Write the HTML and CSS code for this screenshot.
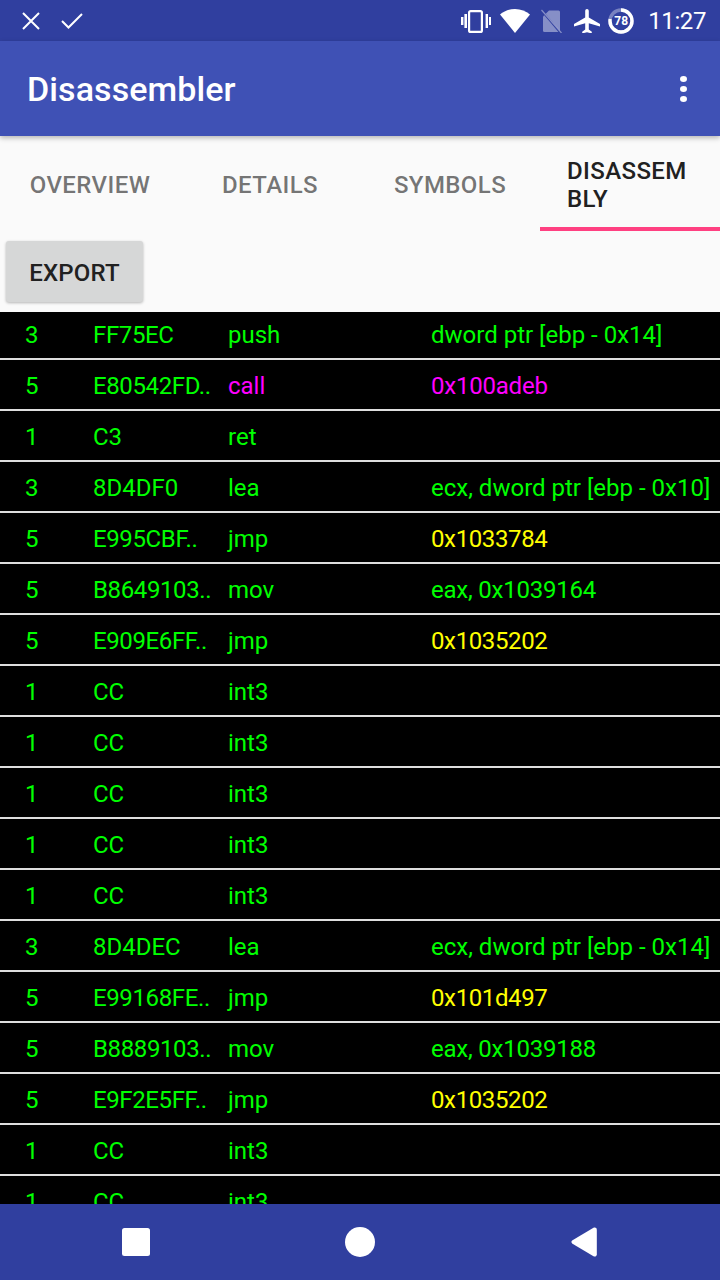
FILE: index.html
```html
<!DOCTYPE html>
<html lang="en">
<head>
<meta charset="utf-8">
<title>Disassembler</title>
<link rel="stylesheet" href="styles.css">
</head>
<body>
<div class="screen">
  <div class="statusbar">
    <div class="status-left">
      <svg class="ic-x" viewBox="0 0 18 18"><path d="M1 1L17 17M17 1L1 17" stroke="#fff" stroke-width="2" fill="none"/></svg>
      <svg class="ic-check" viewBox="0 0 22 16"><path d="M1 8L7.5 14.5L21 1" stroke="#fff" stroke-width="2" fill="none"/></svg>
    </div>
    <div class="status-right">
      <svg class="ic-vib" viewBox="0 0 30 24"><rect x="8.1" y="2.100" width="12.800" height="20.800" rx="1.500" stroke="#fff" stroke-width="2.200" fill="none"/><path d="M0 8h2.400v8H0zM3.400 5h2.600v14H3.400zM24.600 5h2.400v14h-2.400zM28 8h2v8h-2z" fill="#fff"/></svg>
      <svg class="ic-wifi" viewBox="0 0 30 24"><path d="M15 24L0 5.500C4 2.200 9.200 0 15 0s11 2.200 15 5.500z" fill="#fff"/></svg>
      <svg class="ic-sim" viewBox="0 0 22 24"><path d="M8 1.500H17.500a1.500 1.500 0 0 1 1.500 1.500V21.500a1.500 1.500 0 0 1-1.500 1.500H3.500A1.500 1.500 0 0 1 2 21.500V7.500z" fill="#fff" fill-opacity=".42"/><path d="M1.500 2.500L20 24.500" stroke="#303f9f" stroke-width="2"/><path d="M0.500 1L20.500 24" stroke="#fff" stroke-opacity=".42" stroke-width="1.200"/></svg>
      <svg class="ic-plane" viewBox="0 0 26 24"><path d="M11.200 2C11.200.9 12 0 13 0s1.800.9 1.800 2v6.500L26 15v2.600L14.800 14.200V20.500L17.800 22.700V24.500L13 23.200L8.200 24.500V22.700L11.200 20.500V14.200L0 17.600V15L11.200 8.500z" fill="#fff"/></svg>
      <div class="battery">
        <svg class="battery-ring" viewBox="0 0 26 26"><circle cx="13" cy="13" r="11" stroke="#fff" stroke-opacity=".35" stroke-width="3.400" fill="none"/><circle cx="13" cy="13" r="11" stroke="#fff" stroke-width="3.400" fill="none" pathLength="100" stroke-dasharray="78 22" transform="rotate(-90 13 13)"/></svg>
        <span class="battery-text">78</span>
      </div>
      <span class="clock">11:27</span>
    </div>
  </div>

  <header class="appbar">
    <h1 class="appbar-title">Disassembler</h1>
    <div class="overflow"><i></i><i></i><i></i></div>
  </header>

  <nav class="tabs">
    <div class="tab">OVERVIEW</div>
    <div class="tab">DETAILS</div>
    <div class="tab">SYMBOLS</div>
    <div class="tab tab-active"><span>DISASSEM<br>BLY</span></div>
  </nav>

  <div class="toolbar"><button class="export">EXPORT</button></div>

  <main class="list">
    <div class="list-inner">
      <div class="row"><span>3</span><span class="n">FF75EC</span><span>push</span><span>dword ptr [ebp - 0x14]</span></div>
      <div class="row call"><span class="g">5</span><span class="g n">E80542FD..</span><span>call</span><span class="m">0x100adeb</span></div>
      <div class="row"><span>1</span><span>C3</span><span>ret</span><span></span></div>
      <div class="row"><span>3</span><span>8D4DF0</span><span>lea</span><span>ecx, dword ptr [ebp - 0x10]</span></div>
      <div class="row jump"><span class="g">5</span><span class="g n">E995CBF..</span><span class="g">jmp</span><span class="n">0x1033784</span></div>
      <div class="row"><span>5</span><span class="n">B8649103..</span><span>mov</span><span class="m">eax, 0x1039164</span></div>
      <div class="row jump"><span class="g">5</span><span class="g n">E909E6FF..</span><span class="g">jmp</span><span class="n">0x1035202</span></div>
      <div class="row"><span>1</span><span>CC</span><span>int3</span><span></span></div>
      <div class="row"><span>1</span><span>CC</span><span>int3</span><span></span></div>
      <div class="row"><span>1</span><span>CC</span><span>int3</span><span></span></div>
      <div class="row"><span>1</span><span>CC</span><span>int3</span><span></span></div>
      <div class="row"><span>1</span><span>CC</span><span>int3</span><span></span></div>
      <div class="row"><span>3</span><span>8D4DEC</span><span>lea</span><span>ecx, dword ptr [ebp - 0x14]</span></div>
      <div class="row jump"><span class="g">5</span><span class="g n">E99168FE..</span><span class="g">jmp</span><span class="n">0x101d497</span></div>
      <div class="row"><span>5</span><span class="n">B8889103..</span><span>mov</span><span class="m">eax, 0x1039188</span></div>
      <div class="row jump"><span class="g">5</span><span class="g n">E9F2E5FF..</span><span class="g">jmp</span><span class="n">0x1035202</span></div>
      <div class="row"><span>1</span><span>CC</span><span>int3</span><span></span></div>
      <div class="row"><span>1</span><span>CC</span><span>int3</span><span></span></div>
    </div>
  </main>

  <footer class="navbar">
    <div class="nav-item"><svg class="nav-square" viewBox="0 0 28 28"><rect width="28" height="28" rx="2.500" fill="#fff"/></svg></div>
    <div class="nav-item"><svg class="nav-circle" viewBox="0 0 30 30"><circle cx="15" cy="15" r="15" fill="#fff"/></svg></div>
    <div class="nav-item"><svg class="nav-back" viewBox="0 0 26 30"><path d="M1.500 13.300L22.500.8C24 0 25.800.8 25.800 2.800V27.200C25.800 29.200 24 30 22.500 29.200L1.500 16.700C0 15.800 0 14.200 1.500 13.300z" fill="#fff"/></svg></div>
  </footer>
</div>
</body>
</html>
```
FILE: styles.css
```css
* { box-sizing: border-box; }
html, body { margin: 0; padding: 0; }
body { background: #fafafa; font-family: Roboto, "Liberation Sans", sans-serif; }
.screen { width: 720px; height: 1280px; display: flex; flex-direction: column; overflow: hidden; background: #fafafa; }

.statusbar { height: 41px; flex: none; background: #303f9f; display: flex; justify-content: space-between; align-items: center; color: #fff; padding: 0 14px 0 22px; }
.status-left { display: flex; align-items: center; gap: 21px; }
.ic-x { width: 18px; height: 18px; display: block; }
.ic-check { width: 22px; height: 16px; display: block; }
.status-right { display: flex; align-items: center; }
.ic-vib { width: 30px; height: 24px; display: block; margin-right: 9px; }
.ic-wifi { width: 30px; height: 24px; display: block; margin-right: 11px; }
.ic-sim { width: 22px; height: 24px; display: block; margin-right: 11px; }
.ic-plane { width: 26px; height: 24px; display: block; margin-right: 8px; }
.battery { position: relative; width: 26px; height: 26px; margin-right: 14px; }
.battery-ring { width: 26px; height: 26px; display: block; }
.battery-text { position: absolute; inset: 0; display: flex; align-items: center; justify-content: center; font-size: 12px; font-weight: 700; color: #fff; }
.clock { font-size: 24px; line-height: 28px; letter-spacing: -.4px; }

.appbar { height: 95px; flex: none; background: #3f51b5; display: flex; align-items: center; justify-content: space-between; padding: 0 33px 0 27px; box-shadow: 0 2px 5px rgba(0,0,0,.28); position: relative; z-index: 2; }
.appbar-title { margin: 0; font-size: 34px; font-weight: 500; color: #fff; line-height: 40px; letter-spacing: .1px; }
.overflow { display: flex; flex-direction: column; gap: 4px; }
.overflow i { display: block; width: 7px; height: 6px; border-radius: 50%; background: #fff; }

.tabs { height: 95px; flex: none; display: grid; grid-template-columns: repeat(4, 180px); background: #fafafa; }
.tab { display: flex; align-items: center; justify-content: center; font-size: 24px; font-weight: 500; line-height: 28px; letter-spacing: .4px; color: rgba(0,0,0,.55); padding-top: 3px; }
.tab-active { color: #212121; border-bottom: 4px solid #ff4081; padding: 6px 0 0 27px; justify-content: flex-start; }

.toolbar { height: 81px; flex: none; padding: 10px 0 0 6px; background: #fafafa; }
.export { display: block; width: 137px; height: 61px; border: 0; border-radius: 3px; background: #d6d7d7; box-shadow: 0 1px 3px rgba(0,0,0,.28); font-family: inherit; font-size: 24px; font-weight: 500; letter-spacing: .15px; color: #212121; padding: 2px 0 0; }

.list { flex: 1; min-height: 0; overflow: hidden; background: #000; }
.list-inner { margin-top: -3px; }
.row { height: 51px; border-bottom: 2px solid #dedede; display: grid; grid-template-columns: 68px 135px 203px 1fr; padding: 2px 0 0 25px; align-items: center; font-size: 24px; line-height: 28px; color: #00ff00; white-space: nowrap; }
.n { letter-spacing: -.38px; }
.m { letter-spacing: -.22px; }
.call { color: #ff00ff; }
.jump { color: #ffff00; }
.g { color: #00ff00; }

.navbar { height: 76px; flex: none; background: #303f9f; display: grid; grid-template-columns: repeat(3, 224px); padding: 0 24px; align-items: center; justify-items: center; }
.nav-item { display: flex; align-items: center; justify-content: center; }
.nav-square { width: 28px; height: 28px; display: block; }
.nav-circle { width: 30px; height: 30px; display: block; }
.nav-back { width: 26px; height: 30px; display: block; }
```
